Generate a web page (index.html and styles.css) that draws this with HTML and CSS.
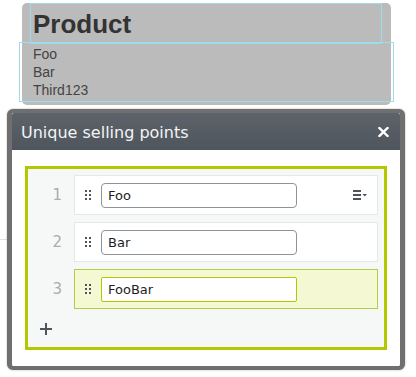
FILE: index.html
```html
<!DOCTYPE html>
<html lang="en">
<head>
  <meta charset="UTF-8" />
  <title>Unique selling points</title>
  <link rel="stylesheet" href="styles.css">
</head>
<body>

<div class="product-panel">
  <h1 class="product-title">Product</h1>
  <div class="product-usps">
    <div>Foo</div>
    <div>Bar</div>
    <div>Third123</div>
  </div>
</div>
<div class="page-rule"></div>

<div class="dialog">
  <div class="dialog-header">
    <span class="dialog-title">Unique selling points</span>
    <button class="dialog-close" title="Close">
      <svg width="11" height="10" viewBox="0 0 11 10"><path d="M1.5 1 L9.5 9 M9.5 1 L1.5 9" stroke="#fff" stroke-width="2.4" stroke-linecap="square"/></svg>
    </button>
  </div>
  <div class="dialog-body">
    <div class="usp-editor">
      <div class="usp-list">
        <div class="usp-row">
          <span class="usp-num">1</span>
          <div class="usp-item">
            <svg class="usp-handle" width="6" height="10" viewBox="0 0 6 10"><rect x="0" y="0" width="2" height="2"/><rect x="4" y="0" width="2" height="2"/><rect x="0" y="4" width="2" height="2"/><rect x="4" y="4" width="2" height="2"/><rect x="0" y="8" width="2" height="2"/><rect x="4" y="8" width="2" height="2"/></svg>
            <input class="usp-input" type="text" value="Foo" />
            <svg class="usp-menu" width="15" height="10" viewBox="0 0 15 10"><rect x="0" y="0" width="8" height="2"/><rect x="0" y="4" width="8" height="2"/><rect x="0" y="8" width="8" height="2"/><path d="M9.5 4 L14 4 L11.75 6.5 Z"/></svg>
          </div>
        </div>
        <div class="usp-row">
          <span class="usp-num">2</span>
          <div class="usp-item">
            <svg class="usp-handle" width="6" height="10" viewBox="0 0 6 10"><rect x="0" y="0" width="2" height="2"/><rect x="4" y="0" width="2" height="2"/><rect x="0" y="4" width="2" height="2"/><rect x="4" y="4" width="2" height="2"/><rect x="0" y="8" width="2" height="2"/><rect x="4" y="8" width="2" height="2"/></svg>
            <input class="usp-input" type="text" value="Bar" />
          </div>
        </div>
        <div class="usp-row">
          <span class="usp-num">3</span>
          <div class="usp-item active">
            <svg class="usp-handle" width="6" height="10" viewBox="0 0 6 10"><rect x="0" y="0" width="2" height="2"/><rect x="4" y="0" width="2" height="2"/><rect x="0" y="4" width="2" height="2"/><rect x="4" y="4" width="2" height="2"/><rect x="0" y="8" width="2" height="2"/><rect x="4" y="8" width="2" height="2"/></svg>
            <input class="usp-input" type="text" value="FooBar" />
          </div>
        </div>
      </div>
      <button class="usp-add" title="Add">
        <svg width="12" height="12" viewBox="0 0 12 12"><path d="M6 0 V12 M0 6 H12" stroke="#4d545c" stroke-width="2"/></svg>
      </button>
    </div>
  </div>
</div>

</body>
</html>
```

FILE: styles.css
```css
body {
  margin: 0;
  background: #fff;
  font-family: "Liberation Sans", Arial, sans-serif;
}

.product-panel {
  width: 352px;
  height: 102px;
  margin: 6px 0 0 22px;
  padding: 0 9px 0 8px;
  background: #bbbbbb;
  border-radius: 5px;
}
.product-title {
  margin: -3px 0 0 0;
  padding: 5px 0 4px 2px;
  border: 1px solid #9ddcec;
  font-size: 26px;
  line-height: 30px;
  font-weight: bold;
  color: #333;
}
.product-usps {
  margin: -2px -12px 0 -11px;
  padding: 2px 0 2px 13px;
  border: 1px solid #9ddcec;
  font-size: 14px;
  line-height: 18px;
  color: #444;
}

.page-rule {
  width: 20px;
  margin-top: 134px;
  border-top: 1px solid #e2e2e2;
}

.dialog {
  position: absolute;
  left: 7px;
  top: 109px;
  width: 388px;
  border-style: solid;
  border-color: #6f6f6f;
  border-width: 4px 5px 4px 5px;
  border-radius: 6px;
  box-shadow: 0 0 2px rgba(0,0,0,0.35);
  background: #fff;
  font-family: "DejaVu Sans", Verdana, sans-serif;
}
.dialog-header {
  display: flex;
  align-items: center;
  justify-content: space-between;
  height: 37px;
  padding: 0 11px 0 9px;
  background: linear-gradient(#5c636b, #4e555d);
  border-radius: 2px 2px 0 0;
}
.dialog-title {
  padding-top: 2px;
  font-size: 16px;
  color: #f4f4f4;
}
.dialog-close {
  display: flex;
  padding: 0;
  border: none;
  background: none;
  margin-top: 1px;
}

.dialog-body {
  padding: 16px 13px;
}
.usp-editor {
  border: 3px solid #b4c800;
  background: #f6f8f8;
  padding: 6px 6px 10px 0;
}
.usp-list {
  display: flex;
  flex-direction: column;
  gap: 7px;
}
.usp-row {
  display: flex;
  align-items: center;
}
.usp-num {
  width: 34px;
  padding-right: 12px;
  text-align: right;
  font-size: 15px;
  color: #a9adb5;
}
.usp-item {
  flex: 1;
  display: flex;
  align-items: center;
  height: 38px;
  padding: 0 9px 0 10px;
  background: #fff;
  border: 1px solid #e5e8e8;
}
.usp-item.active {
  background: #f4f9d3;
  border-color: #b6cb48;
}
.usp-handle {
  fill: #4d545c;
  margin-right: 10px;
}
.usp-input {
  width: 196px;
  height: 25px;
  box-sizing: border-box;
  padding: 0 6px;
  border: 1px solid #8c939b;
  border-radius: 4px;
  font-family: "DejaVu Sans", Verdana, sans-serif;
  font-size: 13px;
  color: #1e1e1e;
  background: #fff;
}
.usp-item.active .usp-input {
  border-color: #b4c800;
  border-radius: 2px;
}
.usp-menu {
  fill: #4d545c;
  margin-left: auto;
}

.usp-add {
  display: flex;
  align-items: center;
  justify-content: center;
  width: 16px;
  height: 16px;
  margin: 12px 0 0 10px;
  padding: 0;
  border: none;
  background: none;
}
```
